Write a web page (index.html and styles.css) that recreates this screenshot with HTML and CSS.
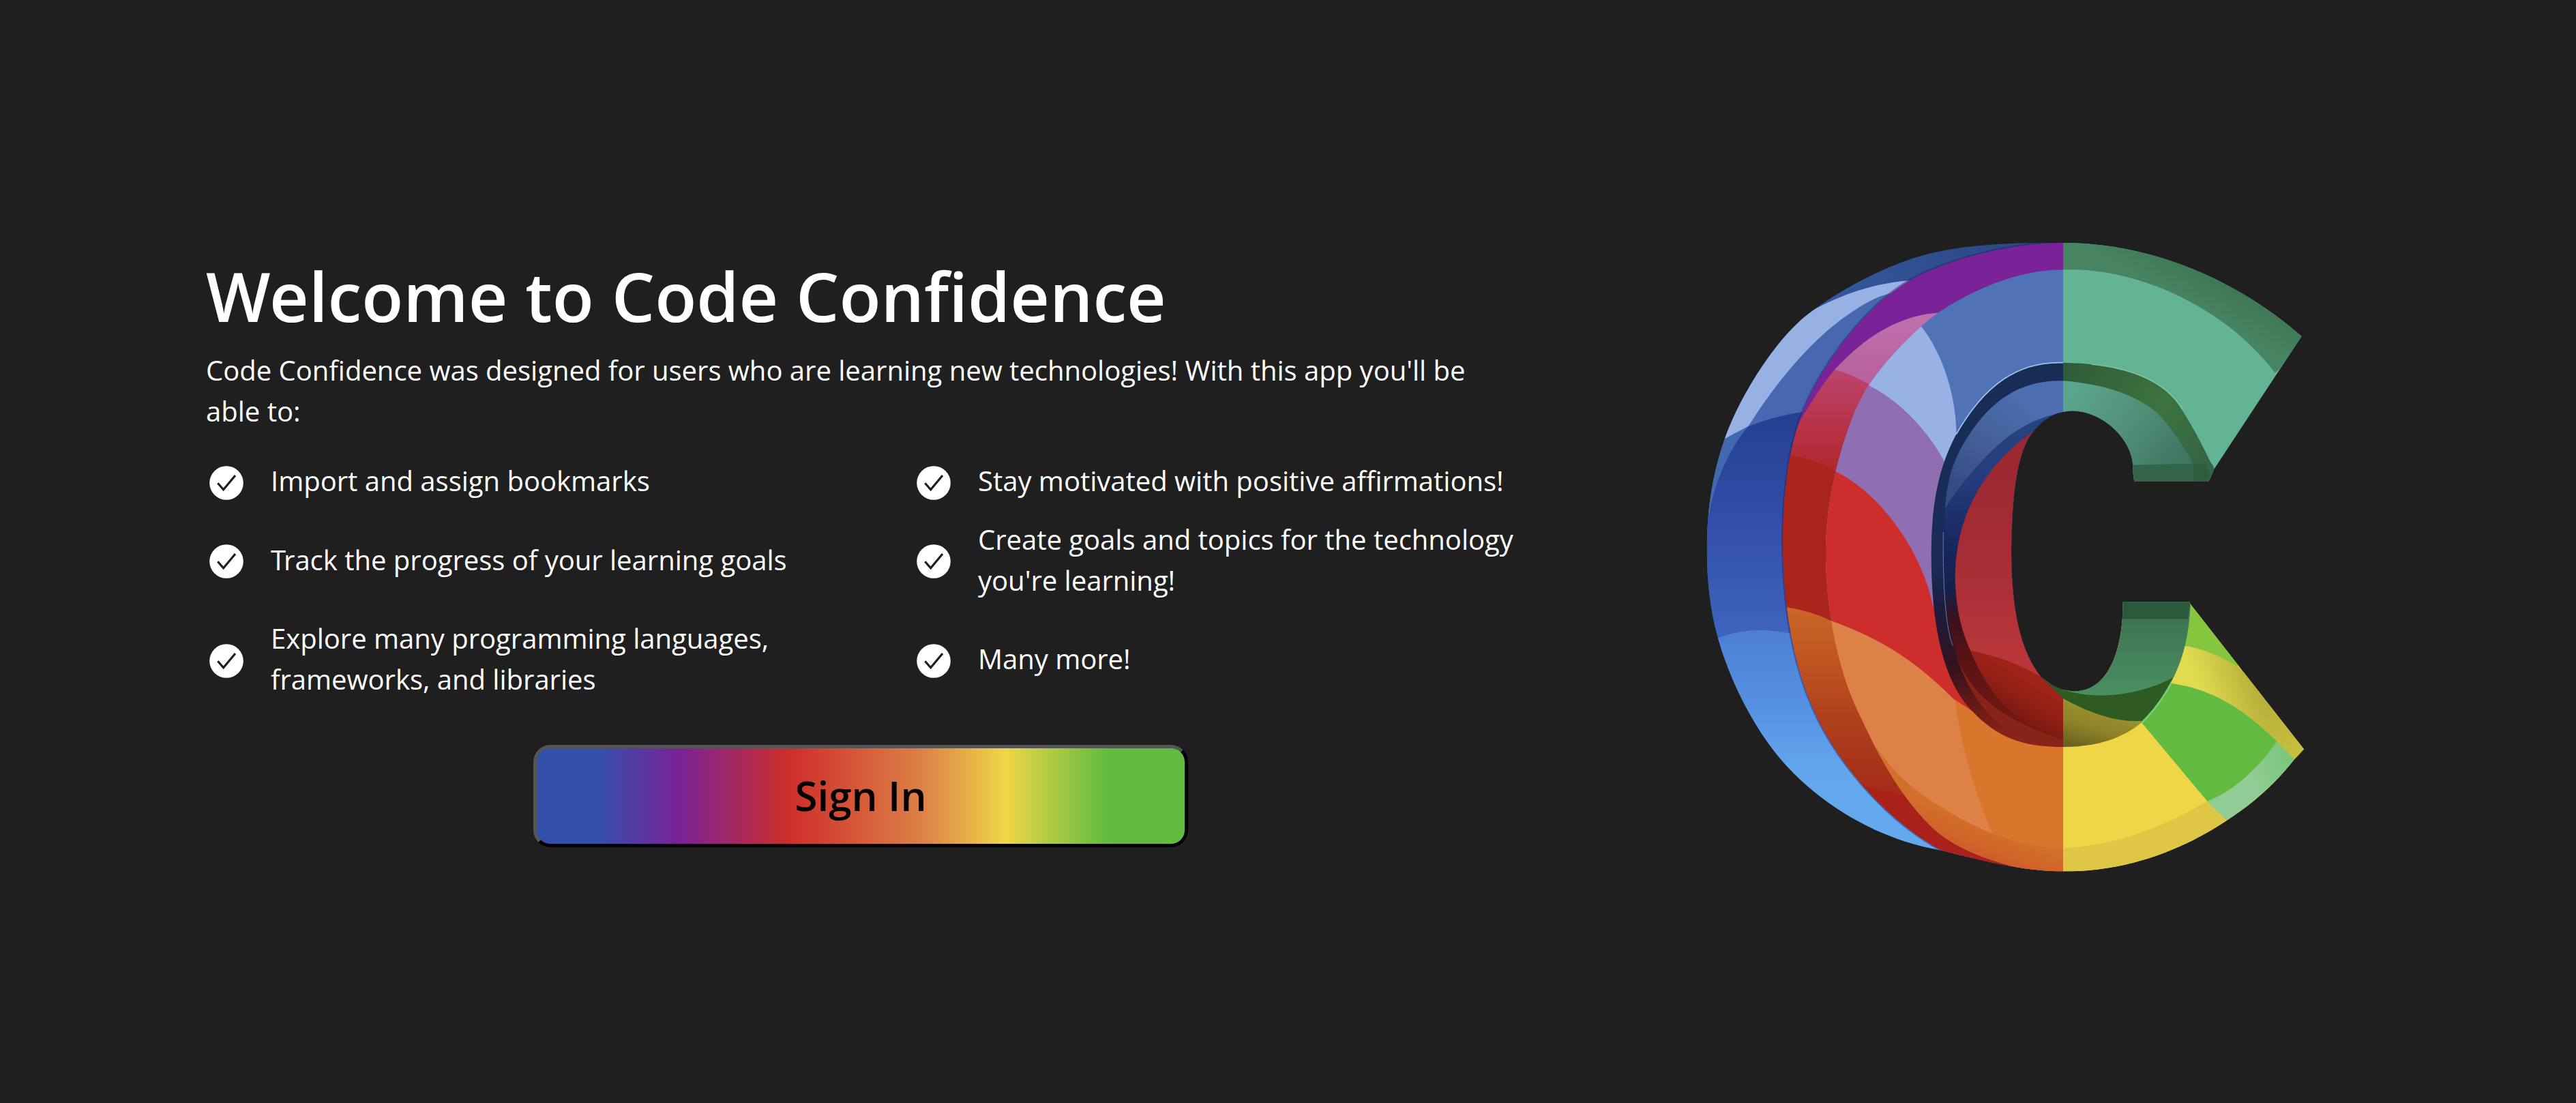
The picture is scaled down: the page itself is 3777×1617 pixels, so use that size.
FILE: index.html
```html
<!DOCTYPE html>
<html lang="en">
<head>
<meta charset="utf-8">
<title>Code Confidence</title>
<link rel="stylesheet" href="styles.css">
</head>
<body>
<main class="landing">
  <section class="intro">
    <h1 class="title"><span class="kern-w">W</span>elcome to Code Confidence</h1>
    <p class="lead">Code Confidence was designed for users who are learning new technologies! With this app you'll be able to:</p>
    <ul class="features">
      <li class="feature"><svg class="icon"><use href="#check"/></svg><span class="label">Import and assign bookmarks</span></li>
      <li class="feature"><svg class="icon"><use href="#check"/></svg><span class="label">Stay motivated with positive affirmations!</span></li>
      <li class="feature"><svg class="icon"><use href="#check"/></svg><span class="label"><span class="kern-t">T</span>rack the progress of your learning goals</span></li>
      <li class="feature"><svg class="icon"><use href="#check"/></svg><span class="label">Create goals and topics for the technology you're learning!</span></li>
      <li class="feature"><svg class="icon"><use href="#check"/></svg><span class="label">Explore many programming languages, frameworks, and libraries</span></li>
      <li class="feature"><svg class="icon"><use href="#check"/></svg><span class="label">Many more!</span></li>
    </ul>
    <button class="signin" type="button">Sign In</button>
  </section>
  <svg class="logo" viewBox="0 0 2760 2910" role="img" aria-label="Code Confidence logo">
    <defs>
      <symbol id="check" viewBox="0 0 60 60">
        <circle cx="30" cy="30" r="24.8" fill="#fff"/>
        <path d="M17.300 30.300L25.600 39.700L43 19" fill="none" stroke="#1f1f1f" stroke-width="3.200"/>
      </symbol>
      <linearGradient id="gDeep" gradientUnits="userSpaceOnUse" x1="0" y1="850" x2="0" y2="1800"><stop offset="0" stop-color="#253f92"/><stop offset=".5" stop-color="#3250aa"/><stop offset="1" stop-color="#3e64bd"/></linearGradient>
      <linearGradient id="gSky" gradientUnits="userSpaceOnUse" x1="0" y1="1790" x2="0" y2="2600"><stop offset="0" stop-color="#4c80d5"/><stop offset=".4" stop-color="#5690e2"/><stop offset=".75" stop-color="#63a6ec"/><stop offset="1" stop-color="#64a8ee"/></linearGradient>
      <linearGradient id="gTop" gradientUnits="userSpaceOnUse" x1="550" y1="380" x2="1300" y2="90"><stop offset="0" stop-color="#3558a0"/><stop offset="1" stop-color="#2d4988"/></linearGradient>
      <linearGradient id="gPink" gradientUnits="userSpaceOnUse" x1="0" y1="390" x2="0" y2="700"><stop offset="0" stop-color="#c070ae"/><stop offset="1" stop-color="#b7609d"/></linearGradient>
      <linearGradient id="gCrim" gradientUnits="userSpaceOnUse" x1="0" y1="650" x2="0" y2="1060"><stop offset="0" stop-color="#bb426a"/><stop offset=".5" stop-color="#b8354d"/><stop offset="1" stop-color="#b22832"/></linearGradient>
      <linearGradient id="gRust" gradientUnits="userSpaceOnUse" x1="0" y1="1700" x2="0" y2="2480"><stop offset="0" stop-color="#c96527"/><stop offset=".35" stop-color="#bd5020"/><stop offset=".6" stop-color="#af401c"/><stop offset="1" stop-color="#a72c19"/></linearGradient>
      <linearGradient id="gStrip" gradientUnits="userSpaceOnUse" x1="0" y1="1500" x2="0" y2="2250"><stop offset="0" stop-color="#182c56"/><stop offset=".25" stop-color="#1c1c3c"/><stop offset=".6" stop-color="#34121c"/><stop offset=".85" stop-color="#6e1b16"/><stop offset="1" stop-color="#8b2418"/></linearGradient>
      <linearGradient id="gInBlue" gradientUnits="userSpaceOnUse" x1="1500" y1="780" x2="1200" y2="1180"><stop offset="0" stop-color="#4d6eb1"/><stop offset=".55" stop-color="#435f96"/><stop offset="1" stop-color="#334d84"/></linearGradient>
      <linearGradient id="gInBand" gradientUnits="userSpaceOnUse" x1="0" y1="850" x2="0" y2="2150"><stop offset="0" stop-color="#28447f"/><stop offset=".2" stop-color="#243c7e"/><stop offset=".45" stop-color="#17265b"/><stop offset=".58" stop-color="#15204a"/><stop offset=".68" stop-color="#3c101c"/><stop offset=".8" stop-color="#561214"/><stop offset="1" stop-color="#701712"/></linearGradient>
      <linearGradient id="gInRed" gradientUnits="userSpaceOnUse" x1="0" y1="950" x2="0" y2="1900"><stop offset="0" stop-color="#9a2731"/><stop offset=".5" stop-color="#a62c35"/><stop offset="1" stop-color="#b8363a"/></linearGradient>
      <linearGradient id="gInDark" gradientUnits="userSpaceOnUse" x1="1500" y1="1960" x2="1370" y2="2170"><stop offset="0" stop-color="#a32318"/><stop offset=".5" stop-color="#931f16"/><stop offset="1" stop-color="#6b1612"/></linearGradient>
      <linearGradient id="gOuterGreen" gradientUnits="userSpaceOnUse" x1="2250" y1="200" x2="2170" y2="340"><stop offset="0" stop-color="#3e7853"/><stop offset="1" stop-color="#478462"/></linearGradient>
      <linearGradient id="gInTeal" gradientUnits="userSpaceOnUse" x1="1700" y1="720" x2="2120" y2="1050"><stop offset="0" stop-color="#5aa58b"/><stop offset=".5" stop-color="#519079"/><stop offset="1" stop-color="#3f7763"/></linearGradient>
      <linearGradient id="gInGreen" gradientUnits="userSpaceOnUse" x1="1640" y1="640" x2="2270" y2="1060"><stop offset="0" stop-color="#2f5c38"/><stop offset=".58" stop-color="#3c733f"/><stop offset="1" stop-color="#356544"/></linearGradient>
      <linearGradient id="gLow" gradientUnits="userSpaceOnUse" x1="0" y1="1740" x2="0" y2="2070"><stop offset="0" stop-color="#3d7552"/><stop offset="1" stop-color="#4a9062"/></linearGradient>
      <linearGradient id="gOlive" gradientUnits="userSpaceOnUse" x1="1740" y1="2120" x2="1690" y2="2290"><stop offset="0" stop-color="#9a902c"/><stop offset=".5" stop-color="#8c8128"/><stop offset="1" stop-color="#6a6220"/></linearGradient>
      <linearGradient id="gBand" gradientUnits="userSpaceOnUse" x1="2230" y1="2010" x2="2450" y2="1930"><stop offset="0" stop-color="#e0da50"/><stop offset="1" stop-color="#b7b03a"/></linearGradient>
      <linearGradient id="gBandEnd" gradientUnits="userSpaceOnUse" x1="2500" y1="2100" x2="2650" y2="2320"><stop offset="0" stop-color="#c4bb3d" stop-opacity="0"/><stop offset="1" stop-color="#c9bf3e"/></linearGradient>
      <linearGradient id="gOrLow" gradientUnits="userSpaceOnUse" x1="1400" y1="2680" x2="1350" y2="2810"><stop offset="0" stop-color="#d2702b"/><stop offset="1" stop-color="#d05c28"/></linearGradient>
      <linearGradient id="gMint" gradientUnits="userSpaceOnUse" x1="2470" y1="2430" x2="2620" y2="2370"><stop offset="0" stop-color="#90cc93"/><stop offset="1" stop-color="#7dc680"/></linearGradient>
      <clipPath id="cOutline">
        <path d="M1635 78C1400 76 1180 85 1000 138C830 190 645 290 515 390C355 514 205 775 150 930C85 1110 68 1280 68 1430C68 1570 85 1700 115 1810C170 2010 285 2235 420 2380C610 2584 860 2710 1100 2750C1260 2790 1450 2842 1635 2842C1900 2845 2150 2755 2355 2618C2470 2545 2570 2455 2652 2350L2694 2305L2196 1668L2190 1657L1902 1657Q1898 1657 1898 1661C1898 1880 1830 2050 1685 2050C1620 2050 1580 2020 1540 1990C1450 1880 1407 1700 1407 1430C1410 1150 1440 980 1505 905C1550 850 1600 820 1660 818C1790 805 1935 930 1942 1055Q1943 1128 1952 1128L2267 1128Q2275 1127 2280 1118L2300 1072L2684 489C2400 240 2020 78 1635 78Z"/>
      </clipPath>
      <clipPath id="cRing">
        <path id="ringEdge" d="M1635 78C1400 78 1130 150 960 243C760 360 570 620 490 820C425 980 400 1210 402 1410C405 1700 455 1970 560 2180C660 2380 860 2620 1100 2750L1200 2850L1640 2850Z"/>
      </clipPath>
      <clipPath id="cFace">
        <path d="M1635 196C1430 196 1230 290 1085 385C960 480 850 600 780 705C680 860 590 1180 591 1430C590 1680 640 1960 750 2175C840 2370 930 2520 1050 2640C1135 2725 1260 2780 1430 2825L1500 2860L1640 2860Z"/>
      </clipPath>
    </defs>
    <g clip-path="url(#cOutline)">
      <!-- back extrusion -->
      <rect width="1640" height="2910" fill="url(#gTop)"/>
      <path d="M960 243C800 255 640 310 515 390L0 700V1400H500V800L960 300Z" fill="#4768b0"/>
      <path d="M970 243C800 255 640 310 500 395L0 700V1000L150 938L250 885C400 650 560 470 740 360Q820 310 880 300Z" fill="#98b1e4"/>
      <path d="M60 1400V1270H78C100 1140 160 980 250 885Q370 838 490 821L640 800V1900H0V1400Z" fill="url(#gDeep)"/>
      <path d="M0 1400V1000L150 938L250 885C160 990 100 1140 78 1270Z" fill="#4268b0"/>
      <path d="M0 1860L118 1816Q260 1760 440 1797L1200 1800V2850H0Z" fill="url(#gSky)"/>
      <!-- middle ring -->
      <use href="#ringEdge" class="ring-shadow"/>
      <g clip-path="url(#cRing)">
        <rect width="1640" height="2910" fill="#7a2297"/>
        <path d="M1100 385C880 395 730 530 630 635L780 760L1100 500Z" fill="url(#gPink)"/>
        <path d="M630 635Q560 720 478 860L380 1100H700L800 713Q720 660 630 635Z" fill="url(#gCrim)"/>
        <path d="M380 1005L435 1012Q545 1030 650 1088V1760H380Z" fill="#aa2519"/>
        <path d="M380 1675L418 1680Q520 1695 620 1742L960 2520L720 2460L400 2100Z" fill="url(#gRust)"/>
        <path d="M680 2440L724 2455L930 2508L1500 2790V2910H600Z" fill="#a92118"/>
      </g>
      <!-- front face, left half -->
      <g clip-path="url(#cFace)">
        <rect width="1640" height="2910" fill="#5072b7"/>
        <path d="M1010 445C1110 570 1165 760 1165 920V1100L700 900L760 600Z" fill="#98b2e5"/>
        <path d="M760 695L780 705C910 770 1030 890 1110 1035L1160 1200V1700H500V900Z" fill="#8f6eb2"/>
        <path d="M600 1070L640 1087C830 1180 1010 1430 1060 1665L1300 2200H500Z" fill="#cd2e2b"/>
        <path d="M500 1700L608 1738C850 1825 1000 1930 1150 2082L1235 2137L1400 2240L1640 2280V2910H500Z" fill="#d9762c"/>
        <path d="M580 1730L608 1738C850 1825 1000 1930 1160 2092C1190 2300 1240 2480 1325 2680C1100 2590 860 2430 750 2195Q640 1960 608 1738Z" fill="#dc8147"/>
        <path d="M670 2000C750 2270 920 2460 1100 2560C1270 2670 1450 2735 1635 2741V2910H900Z" fill="url(#gOrLow)"/>
      </g>
      <!-- front face, right half -->
      <rect x="1635" width="1125" height="1500" fill="#63b395"/>
      <path d="M1635 60V196C2000 185 2330 390 2480 550Q2530 600 2567 650L2760 480V60Z" fill="url(#gOuterGreen)"/>
      <rect x="1635" y="1500" width="1125" height="1410" fill="#efd647"/>
      <path d="M1635 2741C1880 2725 2070 2650 2270 2533L2370 2630L2200 2910H1635Z" fill="#dec744"/>
      <path d="M1980 2188L2110 2015L2400 2000L2600 2250L2460 2450L2270 2535Z" fill="#62bb40"/>
      <path d="M2270 2535C2400 2480 2500 2380 2575 2270L2700 2390L2400 2660L2355 2618Z" fill="url(#gMint)"/>
      <path d="M2160 1840C2240 1855 2320 1890 2400 1937L2760 2300L2660 2356L2575 2270C2440 2140 2300 2040 2108 2015Z" fill="url(#gBand)"/>
      <path d="M2400 1937L2760 2300L2660 2356L2575 2270C2500 2200 2440 2150 2400 2125Z" fill="url(#gBandEnd)"/>
      <path d="M2193 1600L2168 1850C2240 1860 2320 1890 2400 1940L2500 1900Z" fill="#86c53e"/>
      <!-- inner bevel -->
      <path d="M1635 605C1440 598 1290 700 1165 920C1090 1060 1055 1220 1055 1450C1055 1820 1130 2030 1230 2132C1340 2250 1450 2295 1635 2295V1400Z" fill="url(#gStrip)"/>
      <path d="M1635 685C1450 680 1320 770 1220 925C1140 1040 1105 1220 1108 1460C1108 1800 1190 2010 1290 2110Q1400 2235 1635 2275V1400Z" fill="url(#gInBand)"/>
      <path d="M1150 1850C1200 2020 1310 2160 1635 2262V2293C1430 2290 1250 2180 1150 1850Z" fill="#882317"/>
      <path d="M1635 685C1450 680 1320 770 1220 925C1150 1030 1125 1120 1116 1245C1190 1130 1300 1000 1400 925Q1510 845 1635 825Z" fill="url(#gInBlue)"/>
      <path d="M1515 900C1330 1020 1160 1240 1160 1550C1163 1680 1185 1780 1228 1872L1532 1995L1560 1400Z" fill="url(#gInRed)"/>
      <path d="M1228 1872Q1400 1905 1532 1984L1635 2080V2264C1430 2205 1300 2060 1228 1872Z" fill="url(#gInDark)"/>
      <path d="M1635 605C1920 610 2080 690 2150 800C2200 878 2240 950 2298 1072L2340 1140H1635Z" fill="url(#gInGreen)"/>
      <path d="M1635 685C1850 700 2010 770 2080 860Q2150 940 2206 1048L1900 1140H1635Z" fill="url(#gInTeal)"/>
      <path d="M1900 1056L2206 1049H2290L2340 1160H1900Z" fill="#33654a"/>
      <path d="M2206 1049H2262L2282 1100L2260 1140H2206Z" fill="#2f5c3d"/>
      <path d="M1635 2295C1760 2295 1880 2270 1980 2188C2110 2050 2185 1850 2193 1650H1635Z" fill="url(#gOlive)"/>
      <path d="M1535 1985L1635 2082C1740 2140 1870 2190 1982 2180C2050 2120 2100 2030 2125 1980L1800 1950Z" fill="#2d5b22"/>
      <path d="M1535 1985C1640 2085 1900 2105 2120 1990C2165 1900 2190 1800 2196 1650H1700Z" fill="url(#gLow)"/>
      <path d="M1880 1640H2196L2184 1732H1880Z" fill="#2c583b"/>
      <path d="M1165 920C1290 700 1440 598 1635 605" class="glint"/>
      <path d="M1760 612C1980 635 2100 710 2160 810" class="glint soft"/>
      <path d="M1108 1350C1105 1600 1120 1780 1150 1850" class="glint faint"/>
      <path d="M1982 2188Q2060 2110 2112 2012" class="glint mint"/>
    </g>
  </svg>
</main>
</body>
</html>
```
FILE: styles.css
```css
* {
  box-sizing: border-box;
}

body {
  margin: 0;
  background: #1f1f1f;
  color: #fff;
  font-family: "Open Sans", "Noto Sans", sans-serif;
  font-size: 40px;
  line-height: 60px;
}

.landing {
  display: flex;
  align-items: flex-start;
  gap: 258px;
  height: 1617px;
  padding: 330px 0 0 302px;
}

.intro {
  display: flex;
  flex-direction: column;
  width: 1920px;
  padding-top: 43px;
}

.title {
  margin: 0 0 20px;
  font-size: 100px;
  font-weight: 600;
  line-height: 120px;
}

.kern-w {
  letter-spacing: -1.5px;
}

.kern-t {
  letter-spacing: -3px;
}

.lead {
  margin: 0 0 42px;
}

.features {
  display: grid;
  grid-template-columns: 885px 885px;
  column-gap: 152px;
  row-gap: 25.5px;
  margin: 0 0 66px;
  padding: 0;
  list-style: none;
}

.feature {
  display: flex;
  align-items: center;
  gap: 35px;
}

.icon {
  flex: none;
  width: 60px;
  height: 60px;
  margin: 2.5px 0 -2.5px;
}

.label {
  flex: 1;
}

.signin {
  align-self: center;
  width: 960px;
  height: 150px;
  border: 5px solid;
  border-color: #555 #000 #000 #555;
  border-radius: 25px;
  background: linear-gradient(90deg, #3250aa 9.300%, #7a2297 22%, #cd2e2b 39%, #dc8147 59.500%, #efd647 72.300%, #62bb40 88%);
  color: #000;
  font: 600 60px/1.36 "Open Sans", "Noto Sans", sans-serif;
}

.logo {
  flex: none;
  width: 920px;
  height: 970px;
}

.ring-shadow {
  fill: none;
  stroke: #1d1c50;
  stroke-opacity: .4;
  stroke-width: 12;
}

.glint {
  fill: none;
  stroke: #9cc4e4;
  stroke-width: 5;
}

.glint.soft {
  stroke: #7fc49c;
}

.glint.faint {
  stroke: #5d83ad;
  stroke-width: 3;
}

.glint.mint {
  stroke: #74cd80;
  stroke-width: 8;
}
```
